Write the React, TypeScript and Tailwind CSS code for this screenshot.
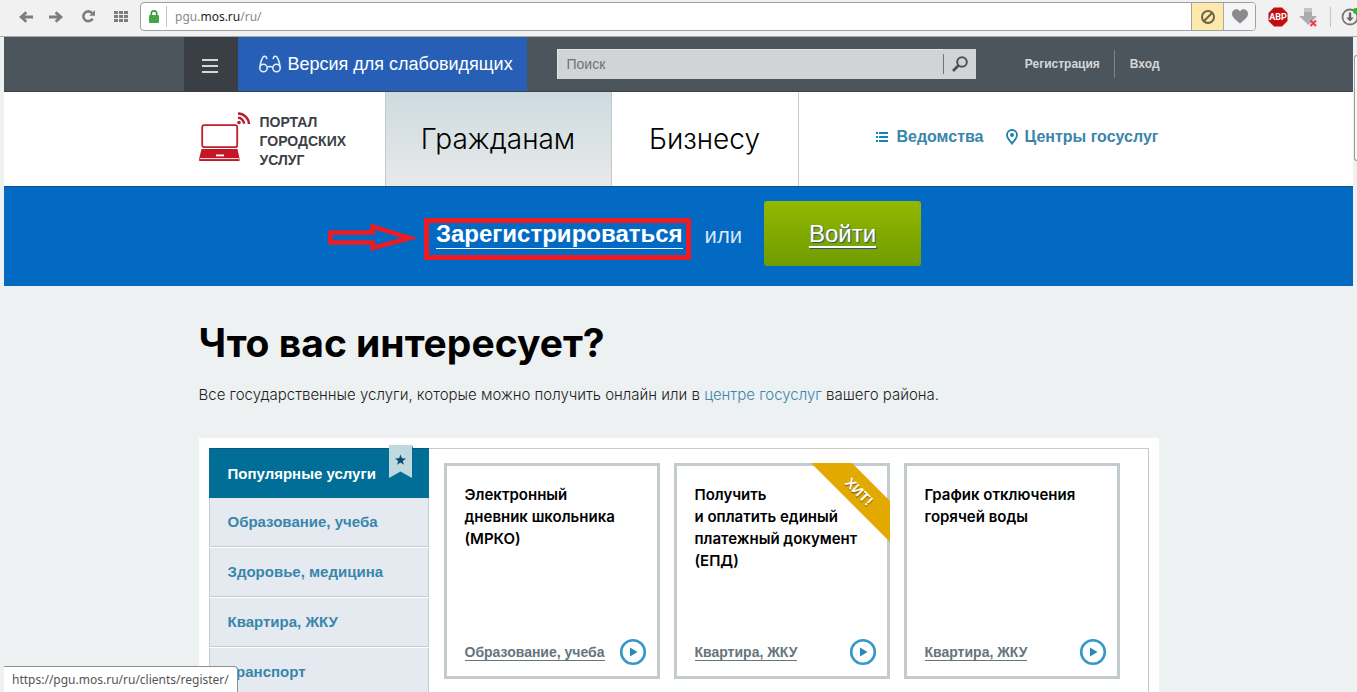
import React from 'react';

const categories = ['Образование, учеба', 'Здоровье, медицина', 'Квартира, ЖКУ', 'Транспорт'];

const cards = [
  { lines: ['Электронный', 'дневник школьника', '(МРКО)'], category: 'Образование, учеба', hit: false },
  { lines: ['Получить', 'и оплатить единый', 'платежный документ', '(ЕПД)'], category: 'Квартира, ЖКУ', hit: true },
  { lines: ['График отключения', 'горячей воды'], category: 'Квартира, ЖКУ', hit: false },
];

function ArrowIcon({ flip }: { flip?: boolean }) {
  return (
    <svg width="14" height="12" viewBox="0 0 14 12" className={flip ? 'rotate-180' : ''} aria-hidden="true">
      <path d="M0 6 6.5 0.3 8.3 2.2 5.8 4.6H14V7.4H5.8L8.3 9.8 6.5 11.7Z" fill="#7d7d7d" />
    </svg>
  );
}

function BrowserBar() {
  return (
    <div className="flex h-[37px] shrink-0 items-start overflow-hidden border-b border-[#a9abac] bg-[#f1f1f1] pt-0.5">
      <div className="flex h-[29px] items-center pl-[19px]">
        <button type="button" aria-label="Назад" className="mr-4"><ArrowIcon /></button>
        <button type="button" aria-label="Вперёд" className="mr-[19px]"><ArrowIcon flip /></button>
        <button type="button" aria-label="Обновить" className="mr-[19px]">
          <svg width="13" height="13" viewBox="0 0 13 13" aria-hidden="true">
            <path d="M10.6 8.6A4.9 4.9 0 1 1 10.2 3.3" fill="none" stroke="#7d7d7d" strokeWidth="2.6" />
            <path d="M13 0.2V5.8H7.2Z" fill="#7d7d7d" />
          </svg>
        </button>
        <button type="button" aria-label="Экспресс-панель" className="mr-3">
          <svg width="14" height="11" viewBox="0 0 14 11" fill="#7d7d7d" aria-hidden="true">
            {[0, 4, 8].map((y) => [0, 5, 10].map((x) => <rect key={`${x}-${y}`} x={x} y={y} width="4" height="3" />))}
          </svg>
        </button>
      </div>
      <div className="flex h-[29px] flex-1 items-stretch overflow-hidden rounded border border-[#9c9fa3] bg-white">
        <div className="my-[3px] flex w-[26px] items-center justify-center border-r border-[#c4c4c4]">
          <svg width="10" height="13" viewBox="0 0 10 13" aria-hidden="true">
            <path d="M2.3 6V3.6a2.7 2.7 0 0 1 5.4 0V6" fill="none" stroke="#3d9b3f" strokeWidth="1.6" />
            <rect x="0" y="5" width="10" height="8" rx="1" fill="#45a447" />
          </svg>
        </div>
        <div className="flex flex-1 items-center pl-2 font-['Noto_Sans',sans-serif] text-xs leading-5 text-[#8a8a8a]">
          <span>pgu.<span className="text-[#1c1c1c]">mos.ru</span>/ru/</span>
        </div>
        <button type="button" aria-label="Блокировка" className="flex w-8 items-center justify-center border-l border-[#a9a48f] bg-[#fde9ac]">
          <svg width="14" height="14" viewBox="0 0 14 14" fill="none" stroke="#6b6249" strokeWidth="2" aria-hidden="true">
            <circle cx="7" cy="7" r="6" />
            <path d="M2.8 2.8 11.2 11.2" transform="matrix(1 0 0 -1 0 14)" />
          </svg>
        </button>
        <button type="button" aria-label="Закладка" className="flex w-8 items-center justify-center border-l border-[#a9a9a9] bg-[#f4f5f7]">
          <svg width="16" height="15" viewBox="0 0 16 15" aria-hidden="true">
            <path d="M8 14.5C5.5 12 0 9 0 4.4 0 .6 5.6-1.6 8 2.4 10.4-1.6 16 .6 16 4.4 16 9 10.5 12 8 14.5Z" fill="#8b8b8b" />
          </svg>
        </button>
      </div>
      <div className="flex h-[29px] items-center">
        <svg width="20" height="20" viewBox="0 0 20 20" className="ml-3" aria-hidden="true">
          <path d="M6 0.5H14L19.5 6V14L14 19.5H6L0.5 14V6Z" fill="#c40d10" />
          <text x="10" y="13.4" textAnchor="middle" fontSize="9" fontWeight="700" fill="#fff" fontFamily="Roboto, sans-serif">ABP</text>
        </svg>
        <svg width="20" height="20" viewBox="0 0 20 20" className="ml-[11px]" aria-hidden="true">
          <path d="M5 1H13V9H18L9.5 18 0 9H5Z" fill="#a9adb0" />
          <path d="M5 1H13V5H5Z" fill="#c2c5c7" />
          <path d="M11.5 13.5 17 19M17 13.5 11.5 19" stroke="#ee3b45" strokeWidth="2" />
        </svg>
        <span className="ml-[11px] h-5 w-px bg-[#c3c3c3]" />
        <svg width="16" height="20" viewBox="0 0 16 20" className="ml-2.5" aria-hidden="true">
          <circle cx="9" cy="10" r="7.5" fill="none" stroke="#777" strokeWidth="1.8" />
          <path d="M7.8 5.5h2.4v5h2.6L9 14.6 5.2 10.5h2.6Z" fill="#666" />
          <circle cx="15" cy="4" r="3" fill="#1fc31f" />
        </svg>
      </div>
    </div>
  );
}

function TopBar() {
  return (
    <div className="border-b border-[#3a4046] bg-[#4d555c]">
      <div className="mx-auto flex h-[54px] w-[990px] max-w-full items-stretch">
        <button type="button" aria-label="Меню" className="flex w-[54px] items-center justify-center bg-[#3a3e45] pt-1 pr-0.5">
          <svg width="16" height="14" viewBox="0 0 16 14" fill="#d5d8da" aria-hidden="true">
            <rect width="16" height="2" /><rect y="6" width="16" height="2" /><rect y="12" width="16" height="2" />
          </svg>
        </button>
        <a href="#accessible" className="flex w-[289px] items-center gap-[7px] bg-[#275fb6] pl-[21px] text-lg whitespace-nowrap text-white">
          <svg width="22" height="18" viewBox="0 0 22 18" fill="none" stroke="#e4f1ff" strokeWidth="1.5" aria-hidden="true">
            <circle cx="4.5" cy="13" r="3.7" /><circle cx="17.5" cy="13" r="3.7" />
            <path d="M8.2 12.5Q11 10.6 13.8 12.5M0.9 12.3C1.2 8 3.4 1.2 5.5 1.2 7 1.2 7.6 2.2 8 4M21.1 12.3C20.8 8 18.6 1.2 16.5 1.2 15 1.2 14.4 2.2 14 4" />
          </svg>
          Версия для слабовидящих
        </a>
        <form className="my-auto ml-[30px] flex h-[30px] w-[419px] items-stretch bg-[#d1d4d5]" onSubmit={(e) => e.preventDefault()}>
          <input
            type="text"
            aria-label="Поиск"
            placeholder="Поиск"
            className="min-w-0 flex-1 border-t border-l border-[#e2e5e6] bg-transparent pb-0.5 pl-[9px] text-sm text-[#555c62] outline-none placeholder:text-[#6d7378]"
          />
          <button type="submit" aria-label="Найти" className="my-[5px] flex w-[33px] items-center justify-center border-l border-[#6d757b]">
            <svg width="16" height="16" viewBox="0 0 16 16" fill="none" stroke="#4a5258" aria-hidden="true">
              <circle cx="10" cy="6" r="4.8" strokeWidth="2" />
              <path d="M6.4 9.6 1 15" strokeWidth="2.8" />
            </svg>
          </button>
        </form>
        <div className="my-auto ml-auto flex h-7 items-center pr-[14px] text-xs font-bold text-[#d5d8da]">
          <a href="#registration" className="pr-[14px]">Регистрация</a>
          <a href="#login" className="flex h-7 items-center border-l border-[#7d858b] pl-[15px]">Вход</a>
        </div>
      </div>
    </div>
  );
}

function Navigation() {
  return (
    <div className="bg-white">
      <div className="mx-auto flex h-[94px] w-[960px] max-w-full items-stretch">
        <a href="#home" className="flex w-[186px] items-center gap-[9px] pt-1 text-sm leading-[19px] font-bold text-[#3b3f45]">
          <svg width="52" height="50" viewBox="0 0 52 50" className="mb-2 shrink-0" aria-hidden="true">
            <rect x="3.2" y="13.2" width="35" height="22" rx="2" fill="#fff" stroke="#c41c2b" strokeWidth="1.8" />
            <path d="M2.5 37H38.5L40.5 46.5V49H0.2V46.5Z" fill="#c41726" />
            <path d="M1 46.6H40" stroke="#fff" strokeWidth="0.9" />
            <path d="M17 43.4H25" stroke="#fff" strokeWidth="1.8" />
            <circle cx="40" cy="10.5" r="1.8" fill="#b51e30" />
            <path d="M39 5.8A6 6 0 0 1 45 11.8M39 1.5A11 11 0 0 1 50 12" fill="none" stroke="#b51e30" strokeWidth="2.4" />
          </svg>
          <span>ПОРТАЛ<br />ГОРОДСКИХ<br />УСЛУГ</span>
        </a>
        <a href="#citizens" className="flex w-[227px] items-center justify-center border-x border-[#c3cace] bg-linear-to-b from-[#ccdbe0] to-[#e9e9e9] font-['Inter',sans-serif] text-[28px] font-light text-black">
          Гражданам
        </a>
        <a href="#business" className="flex w-[187px] items-center justify-center border-r border-[#c9cccf] font-['Inter',sans-serif] text-[28px] font-light text-black">
          Бизнесу
        </a>
        <div className="ml-auto flex items-center gap-[22px] pb-1 text-base font-bold text-[#3986ab]">
          <a href="#departments" className="flex items-center gap-2">
            <svg width="12" height="10" viewBox="0 0 12 10" fill="#1286b3" aria-hidden="true">
              {[0, 4, 8].map((y) => (
                <g key={y}><rect y={y} width="2" height="2" /><rect x="3" y={y} width="9" height="2" /></g>
              ))}
            </svg>
            Ведомства
          </a>
          <a href="#centers" className="flex items-center gap-[7px]">
            <svg width="12" height="16" viewBox="0 0 12 16" aria-hidden="true">
              <path d="M6 14.5C4.6 12.2 1 9.6 1 6a5 5 0 0 1 10 0c0 3.600-3.600 6.200-5 8.500Z" fill="none" stroke="#1c83ae" strokeWidth="1.8" />
              <circle cx="6" cy="6" r="2" fill="#1c83ae" />
            </svg>
            Центры госуслуг
          </a>
        </div>
      </div>
    </div>
  );
}

function LoginBand() {
  return (
    <div className="border-t border-[#08508f] bg-[#036ac4]">
      <div className="mx-auto flex h-[99px] w-[960px] max-w-full items-start justify-center pt-[14px]">
        <div className="relative mt-[19px]">
          <a href="#register" className="block border-b border-white text-2xl leading-7 font-bold text-white">Зарегистрироваться</a>
          <span className="pointer-events-none absolute -top-[2px] -right-2 -bottom-[11px] -left-3 border-[5px] border-[#ed1c24]" />
          <svg width="88" height="30" viewBox="0 0 88 30" className="absolute top-0.5 right-full mr-5" fill="none" stroke="#ed1c24" strokeWidth="4.6" aria-hidden="true">
            <path d="M2.500 10.500H44.500V4.500L82 16 44.500 26V20.500H2.500Z" />
          </svg>
        </div>
        <span className="mt-[18px] px-[22px] text-[22px] leading-[33px] text-[#dbe8f5]">или</span>
        <a
          href="#signin"
          className="flex h-[65px] w-[157px] items-center justify-center rounded-[3px] bg-linear-to-b from-[#93b800] to-[#6f9c00] text-2xl text-white underline decoration-2 underline-offset-4 text-shadow-[1px_1px_1px_#33507a]"
        >
          Войти
        </a>
      </div>
    </div>
  );
}

function Sidebar() {
  return (
    <nav className="w-[220px] shrink-0 text-[15px] font-bold text-[#3986ab]">
      <a href="#popular" className="relative flex h-[50px] items-center border-t border-[#075a7c] bg-[#006e97] pt-px pl-[19px] text-white">
        Популярные услуги
        <svg width="24" height="34" viewBox="0 0 24 34" className="absolute -top-1 right-4" aria-hidden="true">
          <path d="M0 0H23V33L11.500 26.500 0 33Z" fill="#bfd9df" />
          <path d="M23 0 24 3H23Z" fill="#0a7b85" />
          <path d="M11.500 9.500 12.900 13.300 17 13.400 13.800 15.900 14.900 19.800 11.500 17.500 8.100 19.800 9.200 15.900 6 13.400 10.100 13.300Z" fill="#064e77" />
        </svg>
      </a>
      <div className="flex flex-col gap-px">
        {categories.map((name) => (
          <a key={name} href="#category" className="flex h-[49px] items-center border-x border-b border-[#c3ccd3] bg-[#e5eaf1] pl-[18px]">
            {name}
          </a>
        ))}
      </div>
    </nav>
  );
}

function ServiceCard({ lines, category, hit }: { lines: string[]; category: string; hit: boolean }) {
  return (
    <article className="relative flex h-[216px] w-[216px] flex-col justify-between border-[3px] border-[#c3cbcf] bg-white pt-[18px] pr-[10px] pb-[10px] pl-[18px]">
      <h2 className="font-['Inter',sans-serif] text-[15px] leading-[22px] font-semibold whitespace-nowrap text-black">
        {lines.map((line) => <span key={line} className="block">{line}</span>)}
      </h2>
      <div className="flex items-center justify-between">
        <a href="#category" className="border-b border-[#66747c] text-sm leading-4 font-bold text-[#66747c]">{category}</a>
        <button type="button" aria-label="Открыть">
          <svg width="28" height="28" viewBox="0 0 28 28" aria-hidden="true">
            <circle cx="14" cy="14" r="11.800" fill="#fff" stroke="#3498cb" strokeWidth="2.600" />
            <path d="M11 9.500 18.500 14 11 18.500Z" fill="#2688bd" />
          </svg>
        </button>
      </div>
      {hit && (
        <div className="absolute -top-[3px] -right-[3px] size-[79px] overflow-hidden">
          <span className="absolute top-[15px] -left-[15px] flex h-[29px] w-[130px] rotate-45 items-center justify-center bg-[#e2a900] pr-1 text-sm font-bold text-white text-shadow-[1px_1px_1px_#8a6700]">
            ХИТ!
          </span>
        </div>
      )}
    </article>
  );
}

export default function App() {
  return (
    <div className="flex h-screen flex-col overflow-hidden bg-[#edf1f2] font-['Liberation_Sans',Arial,sans-serif]">
      <BrowserBar />
      <div className="relative flex min-h-0 flex-1 overflow-hidden pl-1">
        <div className="min-w-0 flex-1">
          <header>
            <TopBar />
            <Navigation />
          </header>
          <LoginBand />
          <main className="mx-auto w-[960px] max-w-full pt-9">
            <h1 className="font-['Inter',sans-serif] text-[39px] leading-[42px] font-bold text-black">Что вас интересует?</h1>
            <p className="mt-[19px] font-['Inter',sans-serif] text-[15px] leading-6 font-light text-[#1d1d1d]">
              Все государственные услуги, которые можно получить онлайн или в{' '}
              <a href="#center" className="text-[#3b86ac]">центре госуслуг</a> вашего района.
            </p>
            <section className="mt-[31px] bg-white p-[10px]">
              <div className="flex">
                <Sidebar />
                <div className="flex flex-1 gap-[14px] border-t border-r border-[#c9c9c9] pt-[14px] pl-[15px]">
                  {cards.map((card) => <ServiceCard key={card.lines[0]} {...card} />)}
                </div>
              </div>
            </section>
          </main>
        </div>
        <div className="w-1 shrink-0 bg-[#f0f0f0] pt-[18px]">
          <div className="ml-px h-[106px] rounded-l-sm border border-r-0 border-[#9a9a9a] bg-[#f7f7f7]" />
        </div>
        <div className="absolute bottom-0 left-1 rounded-tr border-t border-r border-[#8f8f8f] bg-white px-2 font-['Noto_Sans',sans-serif] text-xs leading-[25px] text-[#555]">
          https://pgu.mos.ru/ru/clients/register/
        </div>
      </div>
    </div>
  );
}
